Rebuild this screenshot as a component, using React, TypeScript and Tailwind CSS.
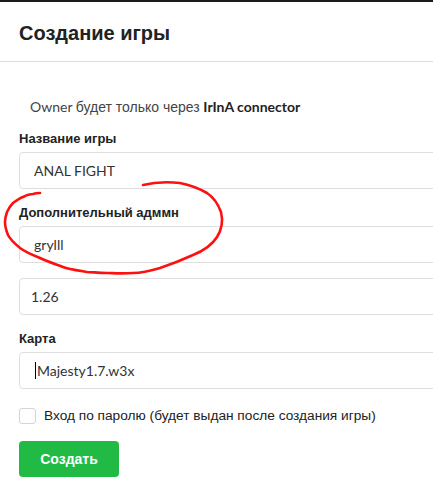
import React from 'react';

const cyr = { fontFamily: '"Liberation Sans", Arial, sans-serif' };

function Field({ label, value, caret, pad }: { label?: string; value: string; caret?: boolean; pad?: string }) {
  return (
    <div className="flex flex-col">
      {label && (
        <div className="h-[18px] mb-[4px] text-[13px] font-bold leading-[18px] text-[#222]" style={cyr}>
          {label}
        </div>
      )}
      <div
        className={`h-[37px] w-[470px] flex items-center rounded-[4px] border border-[#dedede] bg-white text-[14px] text-[#333] ${pad ?? 'pl-[14px]'}`}
      >
        {caret && <span className="inline-block w-[1px] h-[17px] bg-black mr-[1px]" />}
        {value}
      </div>
    </div>
  );
}

export default function App() {
  return (
    <div
      className="relative w-[433px] h-[491px] overflow-hidden bg-white"
      style={{ fontFamily: 'Lato, "Liberation Sans", Arial, sans-serif' }}
    >
      <div className="h-[2px] bg-[#1b1b1b]" />

      {/* Header */}
      <div className="h-[60px] flex items-center pl-[19px] border-b border-[#dcdcdc]">
        <h1 className="text-[20px] font-bold text-[#222] pt-[2px]" style={cyr}>
          Создание игры
        </h1>
      </div>

      {/* Content */}
      <div className="flex flex-col pl-[19px] pt-[36px]">
        <div className="h-[18px] pl-[11px] text-[14px] leading-[18px] text-[#444]">
          Owner <span style={cyr}>будет только через</span> <b className="font-bold text-[#222]">IrInA connector</b>
        </div>

        <div className="mt-[14px] flex flex-col gap-[15px]">
          <Field label="Название игры" value="ANAL FIGHT" />
          <Field label="Дополнительный адммн" value="grylll" />
          <Field value="1.26" pad="pl-[11px]" />
          <Field label="Карта" value="Majesty1.7.w3x" caret pad="pl-[15px]" />
        </div>

        <div className="mt-[17px] h-[20px] flex items-center gap-[8px]">
          <div className="w-[17px] h-[16px] rounded-[3px] border border-[#d4d4d5] bg-white" />
          <span className="text-[13.7px] leading-[20px] text-[#222]" style={cyr}>
            Вход по паролю (будет выдан после создания игры)
          </span>
        </div>

        <button
          className="mt-[15px] w-[100px] h-[36px] rounded-[4px] bg-[#21ba45] text-white text-[14px] font-bold"
          style={cyr}
        >
          Создать
        </button>
      </div>

      {/* red marker annotation */}
      <svg className="absolute left-0 top-0 pointer-events-none" width="433" height="491" viewBox="0 0 433 491">
        <path
          d="M143 185 C 155 182, 170 182, 180 183 C 190 185, 200 189, 207 193 C 213 197, 218 204, 221 212 C 223 220, 222 229, 217 237 C 212 245, 203 251, 193 255 C 182 260, 172 264, 160 268 C 150 271, 140 273, 133 273 C 120 274, 112 273, 107 273 C 98 273, 92 272, 87 272 C 75 270, 68 269, 63 267 C 55 264, 46 261, 40 258 C 30 254, 24 251, 20 248 C 14 243, 10 239, 8 235 C 6 230, 5 226, 5 222 C 5 218, 6 215, 7 212 C 9 208, 11 205, 13 203 C 17 200, 20 198, 23 197 C 27 195, 30 194, 33 194 C 36 193, 38 193, 40 193"
          fill="none"
          stroke="#ff1010"
          strokeWidth="2.6"
          strokeLinecap="round"
          strokeLinejoin="round"
        />
      </svg>
    </div>
  );
}
